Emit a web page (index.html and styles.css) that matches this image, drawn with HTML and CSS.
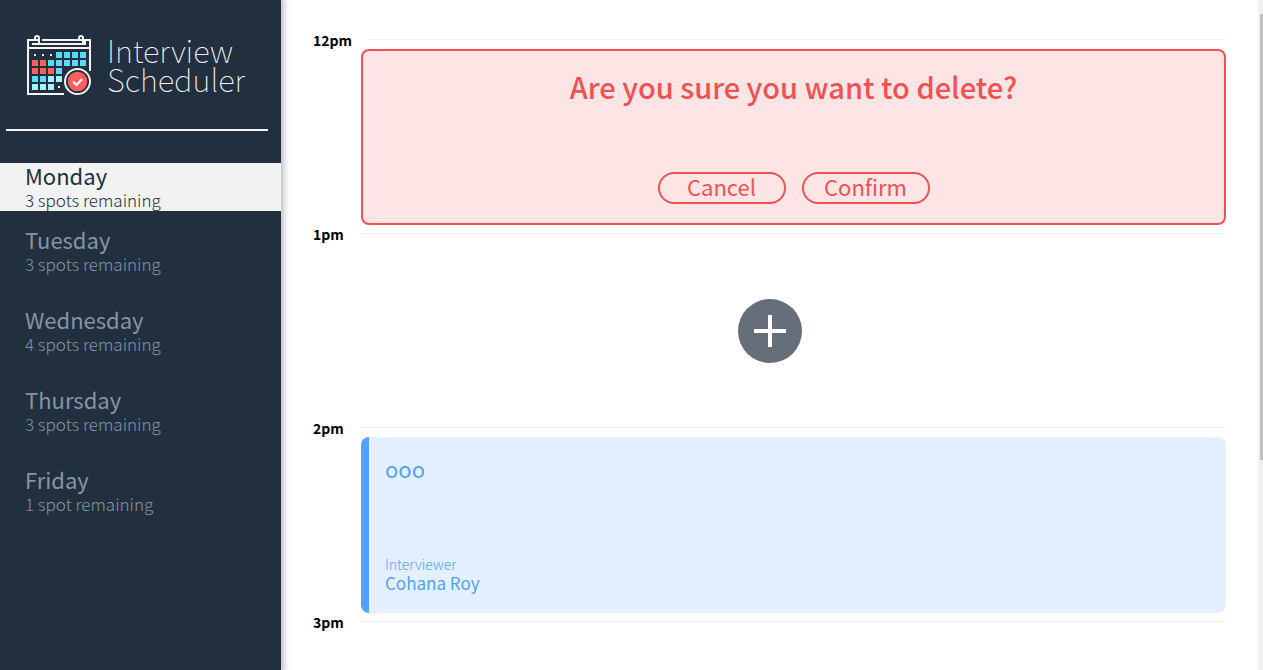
FILE: index.html
```html
<!DOCTYPE html>
<html lang="en">
<head>
<meta charset="utf-8">
<title>Interview Scheduler</title>
<link rel="stylesheet" href="styles.css">
</head>
<body>
<div class="layout">
  <aside class="sidebar">
    <div class="logo">
      <svg class="logo-icon" viewBox="0 0 64 60" width="64" height="60" aria-hidden="true">
        <g fill="none" stroke="#f2f2f2" stroke-width="2">
          <path d="M12 5H1V59H37M1 13H63M63 36V5H58V9M5 9H59M15 5H52"/>
          <path d="M12 9V3a2 2 0 0 0-4 0V5M56 9V3a2 2 0 0 0-4 0V5H56"/>
        </g>
        <path fill="#f2f2f2" d="M7 19h2v2H7zM15 19h2v2h-2zM23 19h2v2h-2zM31 51h2v2h-2z"/>
        <path fill="#56dcf4" d="M29 17h6v6h-6zM37 17h6v6h-6zM45 17h6v6h-6zM53 17h6v6h-6zM21 25h6v6h-6zM29 25h6v6h-6zM37 25h6v6h-6zM45 25h6v6h-6zM53 25h6v6h-6zM29 33h6v6h-6zM5 41h6v6H5zM13 41h6v6h-6z"/>
        <path fill="#ff5f5f" d="M5 25h6v6H5zM13 25h6v6h-6zM5 33h6v6H5zM13 33h6v6h-6zM21 33h6v6h-6z"/>
        <path fill="#a6f2fc" d="M21 41h6v6h-6zM29 41h6v6h-6zM5 49h6v6H5zM13 49h6v6h-6zM21 49h6v6h-6z"/>
        <circle cx="50.500" cy="46.500" r="12.500" fill="#222f3e" stroke="#f2f2f2" stroke-width="2"/>
        <circle cx="50.500" cy="46.500" r="9.800" fill="#ff5f5f"/>
        <path d="M46 46.500l3.500 3.500 5.500-6" fill="none" stroke="#fff" stroke-width="2"/>
      </svg>
      <div class="logo-text">Interview<br>Scheduler</div>
    </div>
    <hr class="separator">
    <nav>
      <ul class="days">
        <li><button class="day day-selected"><span class="day-name">Monday</span><span class="day-spots">3 spots remaining</span></button></li>
        <li><button class="day"><span class="day-name">Tuesday</span><span class="day-spots">3 spots remaining</span></button></li>
        <li><button class="day"><span class="day-name">Wednesday</span><span class="day-spots">4 spots remaining</span></button></li>
        <li><button class="day"><span class="day-name">Thursday</span><span class="day-spots">3 spots remaining</span></button></li>
        <li><button class="day"><span class="day-name">Friday</span><span class="day-spots">1 spot remaining</span></button></li>
      </ul>
    </nav>
  </aside>
  <main class="schedule">
    <article class="slot">
      <header class="slot-header"><h4 class="time">12pm</h4><hr class="line"></header>
      <section class="card confirm">
        <h1 class="question">Are you sure you want to delete?</h1>
        <div class="actions">
          <button class="button">Cancel</button>
          <button class="button">Confirm</button>
        </div>
      </section>
    </article>
    <article class="slot">
      <header class="slot-header"><h4 class="time">1pm</h4><hr class="line"></header>
      <section class="empty">
        <button class="add" aria-label="Add appointment">
          <svg viewBox="0 0 64 64" width="64" height="64" aria-hidden="true"><circle cx="32" cy="32" r="32" fill="#666e7a"/><path d="M32 16V48M16 32H48" stroke="#fff" stroke-width="4"/></svg>
        </button>
      </section>
    </article>
    <article class="slot">
      <header class="slot-header"><h4 class="time">2pm</h4><hr class="line"></header>
      <section class="card show">
        <h2 class="student">ooo</h2>
        <div>
          <h4 class="role">Interviewer</h4>
          <h3 class="interviewer">Cohana Roy</h3>
        </div>
      </section>
    </article>
    <article class="slot">
      <header class="slot-header"><h4 class="time">3pm</h4><hr class="line"></header>
    </article>
  </main>
  <div class="scrollbar" aria-hidden="true"><div class="thumb"></div></div>
</div>
</body>
</html>
```
FILE: styles.css
```css
* { box-sizing: border-box; }
body {
  margin: 0;
  background: #fff;
  color: #000;
  font-family: "Source Sans Pro", "Noto Sans CJK SC", "Noto Sans", sans-serif;
}
h1, h2, h3, h4, ul { margin: 0; padding: 0; }
button {
  font-family: inherit;
  cursor: pointer;
}
.layout {
  display: flex;
  height: 100vh;
  overflow: hidden;
}
.sidebar {
  flex: 0 0 281px;
  background: #222f3e;
  box-shadow: 1px 0 6px 2px rgba(34, 47, 62, 0.3);
}
.logo {
  display: flex;
  gap: 16px;
  padding: 35px 0 0 27px;
  height: 129px;
}
.logo-icon { flex: none; }
.logo-text {
  color: #f2f2f2;
  font-size: 31px;
  font-weight: 100;
  line-height: 29px;
}
.separator {
  margin: 0 13px 32px 6px;
  border: 0;
  height: 2px;
  background: #f2f2f2;
}
.days { list-style: none; }
.day {
  display: flex;
  flex-direction: column;
  align-items: flex-start;
  width: 100%;
  padding: 16px 25px 14px;
  border: 0;
  background: none;
  color: #8395a7;
}
.day-selected {
  height: 48px;
  padding: 0 25px;
  background: #f2f2f2;
  color: #222f3e;
}
.day-name {
  font-size: 22px;
  line-height: 24px;
}
.day-spots {
  font-size: 17px;
  font-weight: 300;
  line-height: 26px;
}
.schedule {
  flex: 1;
  min-width: 0;
  padding: 31px 32px 0;
}
.slot-header {
  display: flex;
  align-items: center;
  height: 18px;
}
.time {
  margin-right: 16px;
  font-size: 14px;
  font-weight: 700;
  line-height: 18px;
}
.line {
  flex: 1;
  margin: 0 0 2px;
  border: 0;
  height: 1px;
  background: #f0f0f0;
}
.card {
  display: flex;
  flex-direction: column;
  justify-content: space-between;
  height: 176px;
  margin-left: 48px;
  border-radius: 8px;
}
.confirm {
  align-items: center;
  padding: 15px 24px 19px;
  border: 2px solid #ee5253;
  background: #fde5e5;
  color: #ee5253;
}
.question {
  font-size: 29px;
  font-weight: 500;
  line-height: 40px;
}
.actions {
  display: flex;
  gap: 16px;
}
.button {
  width: 128px;
  height: 32px;
  padding: 0 0 4px;
  border: 2px solid #ee5253;
  border-radius: 16px;
  background: none;
  color: #ee5253;
  font-size: 22px;
  line-height: 24px;
}
.empty {
  display: flex;
  align-items: center;
  justify-content: center;
  height: 176px;
}
.add {
  display: flex;
  padding: 0;
  border: 0;
  background: none;
}
.show {
  padding: 17px 16px 20px;
  border-left: 8px solid #54a0ff;
  background: #e4f0ff;
  color: #54a0ff;
}
.student {
  font-size: 22px;
  font-weight: 400;
  line-height: 28px;
}
.role {
  font-size: 14px;
  font-weight: 300;
  line-height: 18px;
}
.interviewer {
  font-size: 17px;
  font-weight: 400;
  line-height: 20px;
}
.scrollbar {
  flex: 0 0 5px;
  padding: 14px 0 0 2px;
  background: #f1f1f1;
}
.thumb {
  height: 68%;
  background: #c1c1c1;
}
```
